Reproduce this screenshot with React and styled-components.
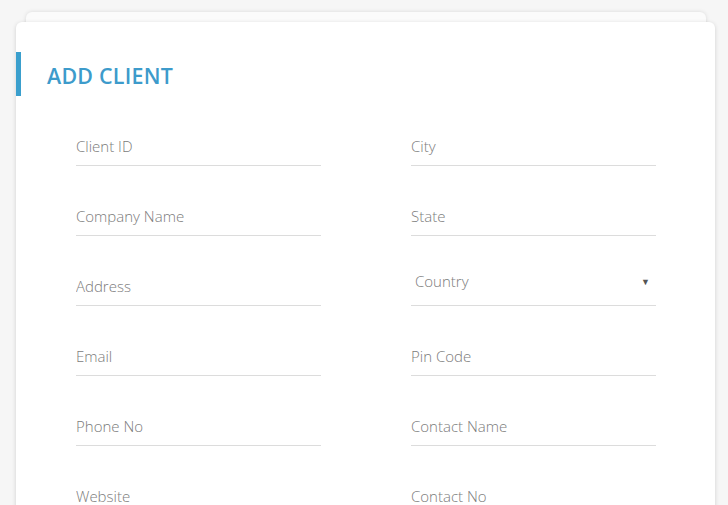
import styled, { createGlobalStyle } from "styled-components";

const GlobalStyle = createGlobalStyle`
  html, body {
    margin: 0;
    padding: 0;
    background: #f6f6f6;
    font-family: "Open Sans", "Liberation Sans", sans-serif;
    overflow: hidden;
  }
`;

const Page = styled.div`
  padding: 12px 13px 0 16px;
  height: 505px;
  box-sizing: border-box;
`;

const Stack = styled.div`
  position: relative;
  padding-top: 10px;
`;

const BackCard = styled.div`
  position: absolute;
  top: 0;
  left: 10px;
  right: 9px;
  height: 40px;
  background: #fbfbfb;
  border-radius: 6px;
  box-shadow: 0 0 4px rgba(0, 0, 0, 0.12);
`;

const Card = styled.div`
  position: relative;
  background: #fff;
  border-radius: 6px;
  box-shadow: 0 1px 4px rgba(0, 0, 0, 0.16);
  padding: 30px 59px 40px 0;
  min-height: 520px;
`;

const Header = styled.div`
  display: flex;
  align-items: center;
  height: 44px;
  border-left: 5px solid #3a9fcd;
  padding-left: 26px;
`;

const Title = styled.h2`
  margin: 2px 0 0;
  font-size: 21.4px;
  font-weight: 600;
  color: #3d9bcb;
  letter-spacing: 0.25px;
`;

const Form = styled.form`
  display: grid;
  grid-template-columns: 1fr 1fr;
  column-gap: 90px;
  row-gap: 30px;
  margin: 30px 0 0 60px;
`;

const Field = styled.div`
  position: relative;
  height: 40px;
  box-sizing: border-box;
  border-bottom: 1px solid #dcdcdc;
`;

const Input = styled.input`
  width: 100%;
  height: 100%;
  box-sizing: border-box;
  border: none;
  outline: none;
  padding: 1px 0 0 0;
  background: transparent;
  font-family: "Open Sans", "Liberation Sans", sans-serif;
  font-size: 15px;
  font-weight: 300;
  color: #555;
  &::placeholder {
    color: #7b7b7b;
  }
`;

const Select = styled.select`
  width: 100%;
  height: 100%;
  border: none;
  outline: none;
  appearance: none;
  background: transparent;
  padding: 0 0 9px 4px;
  font-family: "Open Sans", "Liberation Sans", sans-serif;
  font-size: 15px;
  font-weight: 300;
  color: #7b7b7b;
`;

const Arrow = styled.span`
  position: absolute;
  right: 6px;
  top: 9px;
  font-size: 9px;
  color: #555;
  pointer-events: none;
`;

const fields = [
  ["Client ID", "City"],
  ["Company Name", "State"],
  ["Address", "Country"],
  ["Email", "Pin Code"],
  ["Phone No", "Contact Name"],
  ["Website", "Contact No"],
];

function App() {
  return (
    <>
      <GlobalStyle />
      <Page>
        <Stack>
          <BackCard />
          <Card>
            <Header>
              <Title>ADD CLIENT</Title>
            </Header>
            <Form>
              {fields.flat().map((name) =>
                name === "Country" ? (
                  <Field key={name}>
                    <Select defaultValue="">
                      <option value="">Country</option>
                    </Select>
                    <Arrow>▼</Arrow>
                  </Field>
                ) : (
                  <Field key={name}>
                    <Input placeholder={name} />
                  </Field>
                )
              )}
            </Form>
          </Card>
        </Stack>
      </Page>
    </>
  );
}

export default App;
